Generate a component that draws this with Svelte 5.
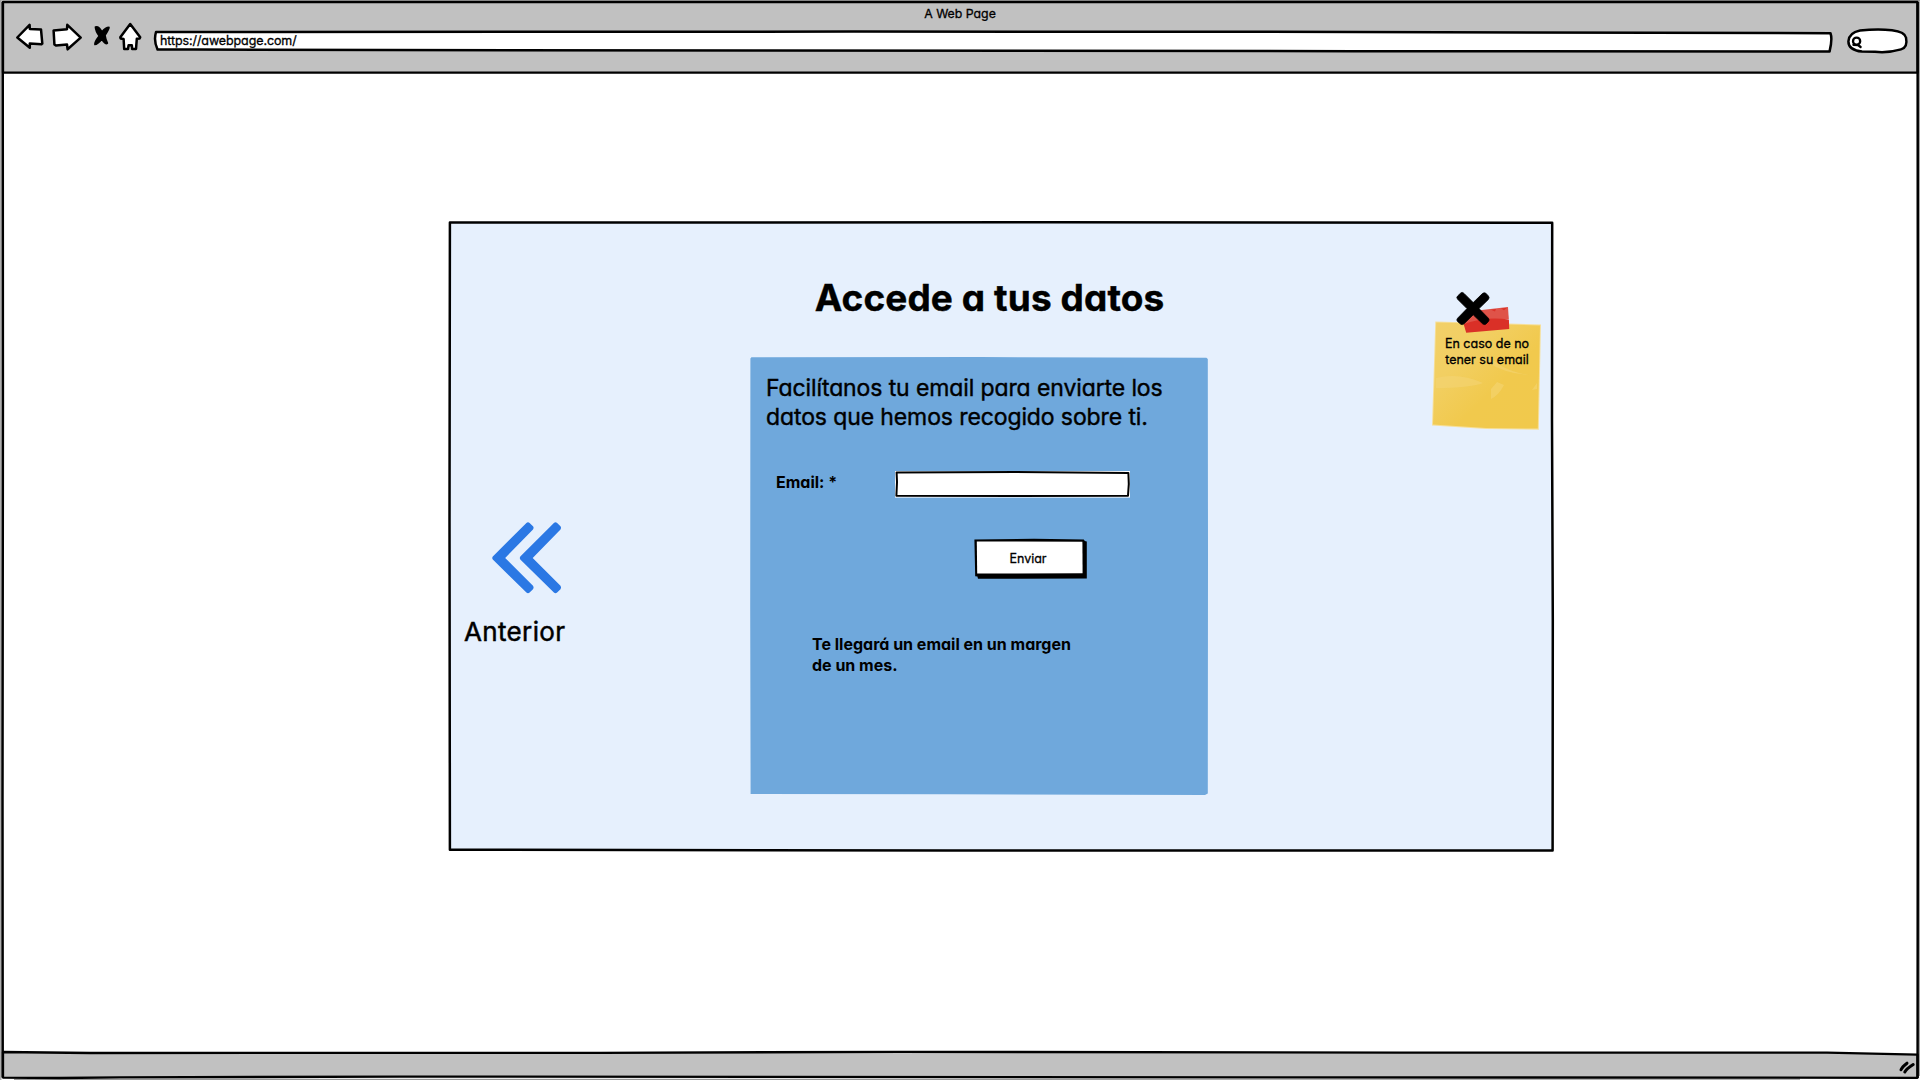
<script lang="ts">
  let email = $state('');
</script>

<div class="window">
  <svg class="sketch" viewBox="0 0 1920 1080" aria-hidden="true">
    <path class="fringe" d="M0 1 L1920 0.5 M0.8 0 L0.8 1080 M1919.3 0 L1919.3 1076 M14 1079.4 L1800 1079.2" />
    <path class="bar" d="M3 2 L1917.5 2 L1917.6 72.7 L3 72.5 Z" />
    <path class="bar" d="M3 1052 L90 1053 L600 1052.8 L900 1051.8 L1400 1052.6 L1827 1052.6 L1917.5 1054.7 L1917.5 1077.8 L400 1076.6 L120 1077.4 L60 1078 L3 1077.6 Z" />
    <path class="line" d="M2.7 2 L2.9 400 L2.5 800 L2.7 1077.5 M1917.6 2 L1918 500 L1917.6 1078" />
  </svg>

  <header>
    <div class="title">A Web Page</div>
    <div class="toolbar">
      <svg class="nav" viewBox="0 0 130 36" aria-hidden="true">
        <path class="ico" d="M2.3 19.5 L14.6 6.8 L14.8 11 L26 11.4 L27.3 25.6 L26.5 26.2 L14.8 25.6 L14.8 29.8 Z" />
        <path class="ico" d="M38.6 12.4 L52 11.2 L52.3 6.8 L65.7 19.6 L52.6 31.3 L52 26.5 L41 27.6 L39.4 26.4 Z" />
        <path class="cross" d="M80.4 9 Q84.4 8.3 86.8 14.1 Q90.6 9.3 94 9.3 Q94.2 11 90 17.2 Q90.6 21.7 92.4 25.1 Q90.5 27 86.8 21.3 Q82.6 26.5 79.9 26.5 Q79.3 24.3 84.2 18 Q80.6 13.2 80.4 9 Z" />
        <path class="ico" d="M115.2 6.1 L125.2 19.3 L124.6 20.6 L121.8 20.8 L121 31 L117.2 31 L116.8 27.2 L113.6 27.2 L113 31 L109.2 31 L108.6 21 L105.6 20.4 L105.3 19.2 Z" />
      </svg>
      <div class="address">
        <svg class="shape" viewBox="0 0 1680 22" aria-hidden="true">
          <path class="ico" d="M2 1 L700 .6 L1100 .8 L1676.5 2.2 Q1678.6 8 1675.6 20.4 L1200 20.2 L600 19.6 L40 18.6 L3.6 18.6 Q-.6 10 2 1 Z" />
        </svg>
        <span>https://awebpage.com/</span>
      </div>
      <svg class="search" viewBox="0 0 62 26" aria-hidden="true">
        <path class="ico" d="M13 2.6 Q30 .4 45 2.2 Q58 3.8 59 9.6 Q61 19.6 54 21.4 Q40 25.4 28 23.8 L15 23.6 Q1.4 22 1.4 13.4 Q2 4.8 13 2.6 Z" />
        <circle class="lens" cx="9.6" cy="13.2" r="3.6" />
        <path class="lens" d="M6.4 16.8 L11 17 L13.6 19" />
      </svg>
    </div>
  </header>

  <main>
    <section class="dialog">
      <svg class="shape" viewBox="0 0 1106 632" aria-hidden="true">
        <path class="dialog-line" d="M1.9 2.6 L300 2.4 L600 2.2 L1104.2 2.8 L1104 200 L1104.8 400 L1104.6 630.4 L500 630.4 L1.9 629.8 L1.5 300 Z" />
      </svg>

      <aside class="left">
        <svg class="chevrons" viewBox="0 0 70 72" aria-hidden="true">
          <path d="M34.4 .9 Q36 -.4 37.6 .9 L41 4.2 Q42.2 5.8 41 7.4 L13.2 35.9 L41 63.8 Q42.2 65.6 41 67.2 L37.6 70.6 Q36 71.8 34.4 70.6 L.8 37.4 Q-.3 35.9 .8 34.4 Z" />
          <path transform="translate(27.5 0)" d="M34.4 .9 Q36 -.4 37.6 .9 L41 4.2 Q42.2 5.8 41 7.4 L13.2 35.9 L41 63.8 Q42.2 65.6 41 67.2 L37.6 70.6 Q36 71.8 34.4 70.6 L.8 37.4 Q-.3 35.9 .8 34.4 Z" />
        </svg>
        <span class="previous">Anterior</span>
      </aside>

      <div class="center">
        <h1>Accede a tus datos</h1>
        <div class="panel">
          <svg class="shape" viewBox="0 0 458 438" aria-hidden="true">
            <path class="panel-fill" d="M1.4 .2 L230 0 L456.4 .8 L457.8 2 L458 200 L457.8 436.6 L455 438 L200 437.2 L.6 437 L.2 250 L.4 1.6 Z" />
          </svg>
          <p class="intro">Facilítanos tu email para enviarte los<br />datos que hemos recogido sobre ti.</p>
          <div class="field">
            <label for="email">Email: *</label>
            <div class="input">
              <svg class="shape" viewBox="0 0 236 28" aria-hidden="true">
                <rect class="halo" x="0" y="1" width="235" height="26.6" />
                <path class="ico box" d="M1.6 2.4 L120 2 L233.4 3 L233.8 14 L233 25.8 L120 26 L1.4 25.8 L2 12 Z" />
              </svg>
              <input id="email" type="text" bind:value={email} />
            </div>
          </div>
          <button type="button">
            <svg class="shape" viewBox="0 0 114 42" aria-hidden="true">
              <path d="M.4 1.6 L60 .8 L109.8 1.4 L110.8 3 L112.8 3.4 L112.8 40.4 L4 40.8 L3.4 38.4 L1.2 38.2 L.8 20 Z" />
              <path class="face" d="M2.8 3.4 L108.4 3.8 L108.6 35.2 L3.2 35.6 Z" />
            </svg>
            <span>Enviar</span>
          </button>
          <p class="notice">Te llegará un email en un margen<br />de un mes.</p>
        </div>
      </div>

      <aside class="right">
        <div class="note">
          <svg class="shape" viewBox="0 0 112 140" aria-hidden="true">
            <defs>
              <linearGradient id="paper" x1="0" y1="0" x2="1" y2="1">
                <stop offset="0" stop-color="#f2d069" />
                <stop offset=".3" stop-color="#f2cf62" />
                <stop offset=".6" stop-color="#f1c94d" />
                <stop offset="1" stop-color="#f1c94c" />
              </linearGradient>
            </defs>
            <path class="paper-edge" d="M4.3 29.6 L110 32.4 L107.8 137.8 L55 137 L1 133.4 Z" />
            <path fill="url(#paper)" d="M5.2 30.6 L109 33.4 L106.8 136.6 L55 136 L2 132.4 Z" />
            <path class="crease" d="M5 86 Q28 80 52 91 Q38 96 5 96 Z M60 107 L60 97 L66 90 L73 93 Q68 103 60 107 Z M53 60 Q70 79 98 83 Q75 82 56 70 Z M101 98 L106 91 L106 97 Z" />
            <path class="tape-top" d="M33.2 20 L77 15 L77.8 27 L33.4 32 Z" />
            <path class="tape" d="M32.6 32 Q54 24 77.9 27.4 L78.2 37 L35.2 40.7 Z" />
            <path class="tape" d="M60 17.8 L65 17 L64 19.4 Z M70 16.6 L76 15.8 L73 18.2 Z" />
            <path class="x" d="M30 .8 L26.6 4 Q25 5.6 26.6 7.2 L36 16.6 L26.6 26.2 Q25 28 26.6 29.6 L29.8 32.2 Q31.4 33.2 33 31.8 L42.2 22.8 L51.6 31.8 Q53.4 33.2 55 32 L57.4 29.6 Q58.8 28 57.4 26.2 L48 16.6 L57.4 7.4 Q58.8 5.6 57.4 4 L54.8 1.2 Q53 .2 51.4 1.6 L42.2 10.6 L33 1.4 Q31.4 -.2 30 .8 Z" />
          </svg>
          <p>En caso de no<br />tener su email</p>
        </div>
      </aside>
    </section>
  </main>

  <footer>
    <svg class="grip" viewBox="0 0 18 14" aria-hidden="true">
      <path d="M3 9.8 Q4 7 9 3.2 M6.8 12 Q8.4 9 15.2 4.6" />
    </svg>
  </footer>
</div>

<style>
  :global(body) { background: #fff; overflow: hidden; }
  .window {
    position: relative;
    width: 1920px;
    height: 1080px;
    display: flex;
    flex-direction: column;
    color: #000;
    font-family: Inter, "Liberation Sans", sans-serif;
    font-feature-settings: "cv11" 1;
  }
  h1, p { margin: 0; }
  svg { display: block; overflow: visible; }
  .sketch, .shape { position: absolute; inset: 0; width: 100%; height: 100%; pointer-events: none; }
  .bar { fill: #c1c1c1; stroke: #000; stroke-width: 2.3; stroke-linejoin: round; }
  .line { fill: none; stroke: #000; stroke-width: 2.5; }
  .fringe { fill: none; stroke: #999; stroke-width: 1.2; }
  .ico { fill: #fff; stroke: #000; stroke-width: 2.5; stroke-linejoin: round; }
  .box { stroke-width: 2; }

  header { position: relative; height: 73px; }
  .title { padding-top: 6px; text-align: center; font-size: 12.3px; line-height: 16px; font-weight: 400; -webkit-text-stroke: .3px #000; }
  .toolbar { display: flex; }
  .nav { width: 130px; height: 36px; margin-left: 15px; margin-top: -4px; }
  .cross { fill: #000; stroke: #000; stroke-width: 1.6; stroke-linejoin: round; }
  .address { position: relative; width: 1680px; height: 22px; margin: 9px 0 0 9px; }
  .address span { position: absolute; left: 6px; top: 1px; font-size: 12.5px; line-height: 18px; font-weight: 400; letter-spacing: -.1px; -webkit-text-stroke: .3px #000; }
  .search { width: 62px; height: 26px; margin: 6px 0 0 13px; }
  .lens { fill: none; stroke: #000; stroke-width: 2.3; stroke-linecap: round; }

  main { flex: 1; padding: 147px 0 0 448px; }
  .dialog { position: relative; width: 1106px; height: 632px; display: flex; }
  .dialog-line { fill: #e6f0fd; stroke: #000; stroke-width: 2.5; stroke-linejoin: round; }
  .left { position: relative; width: 302px; padding: 302px 0 0 16px; box-sizing: border-box; }
  .chevrons { width: 70px; height: 72px; margin-left: 28px; fill: #2b78e4; }
  .previous { display: block; margin-top: 22px; font-size: 26px; line-height: 32px; letter-spacing: .35px; -webkit-text-stroke: .5px #000; }
  .center { position: relative; width: 458px; padding-top: 55px; }
  h1 { width: 479px; text-align: center; font-size: 37px; line-height: 46px; font-weight: 700; letter-spacing: .1px; white-space: nowrap; -webkit-text-stroke: .4px #000; }
  .panel { position: relative; width: 458px; height: 438px; margin-top: 36px; }
  .panel-fill { fill: #6fa8dc; }
  .intro { position: relative; padding: 17px 0 0 16px; font-size: 23px; line-height: 29px; letter-spacing: -.11px; white-space: nowrap; -webkit-text-stroke: .4px #000; }
  .field { position: relative; display: flex; padding: 39px 0 0 26px; }
  label { width: 119px; padding-top: 1px; font-size: 16px; line-height: 20px; font-weight: 700; }
  .input { position: relative; width: 236px; height: 28px; margin-top: -1px; }
  .halo { fill: #fff; }
  input { position: relative; width: 226px; height: 18px; margin: 5px; padding: 0; border: 0; outline: 0; background: transparent; font: inherit; display: block; }
  button { position: relative; display: block; width: 114px; height: 42px; margin: 40px 0 0 224px; padding: 0 6px 0 0; border: 0; background: none; font: 400 12.5px/16px Inter, sans-serif; font-feature-settings: inherit; color: #000; -webkit-text-stroke: .3px #000; }
  button span { position: relative; }
  .face { fill: #fff; }
  .notice { position: relative; padding: 54px 0 0 62px; font-size: 16px; line-height: 21px; font-weight: 700; white-space: nowrap; }
  .right { flex: 1; padding: 72px 0 0 223px; }
  .note { position: relative; width: 112px; height: 140px; }
  .note p { position: relative; padding-top: 44px; text-align: center; font-size: 12.5px; line-height: 16px; font-weight: 400; white-space: nowrap; -webkit-text-stroke: .3px #000; }
  .paper-edge { fill: #f6df9a; }
  .crease { fill: #f4d676; opacity: .55; }
  .tape-top { fill: #df5349; }
  .tape { fill: #da3027; }
  .x { fill: #000; stroke: #000; stroke-width: .8; stroke-linejoin: round; }

  footer { position: relative; height: 27px; display: flex; justify-content: flex-end; align-items: flex-start; }
  .grip { width: 18px; height: 14px; margin: 7px 4px 0 0; fill: none; stroke: #000; stroke-width: 3; stroke-linecap: round; }
</style>
